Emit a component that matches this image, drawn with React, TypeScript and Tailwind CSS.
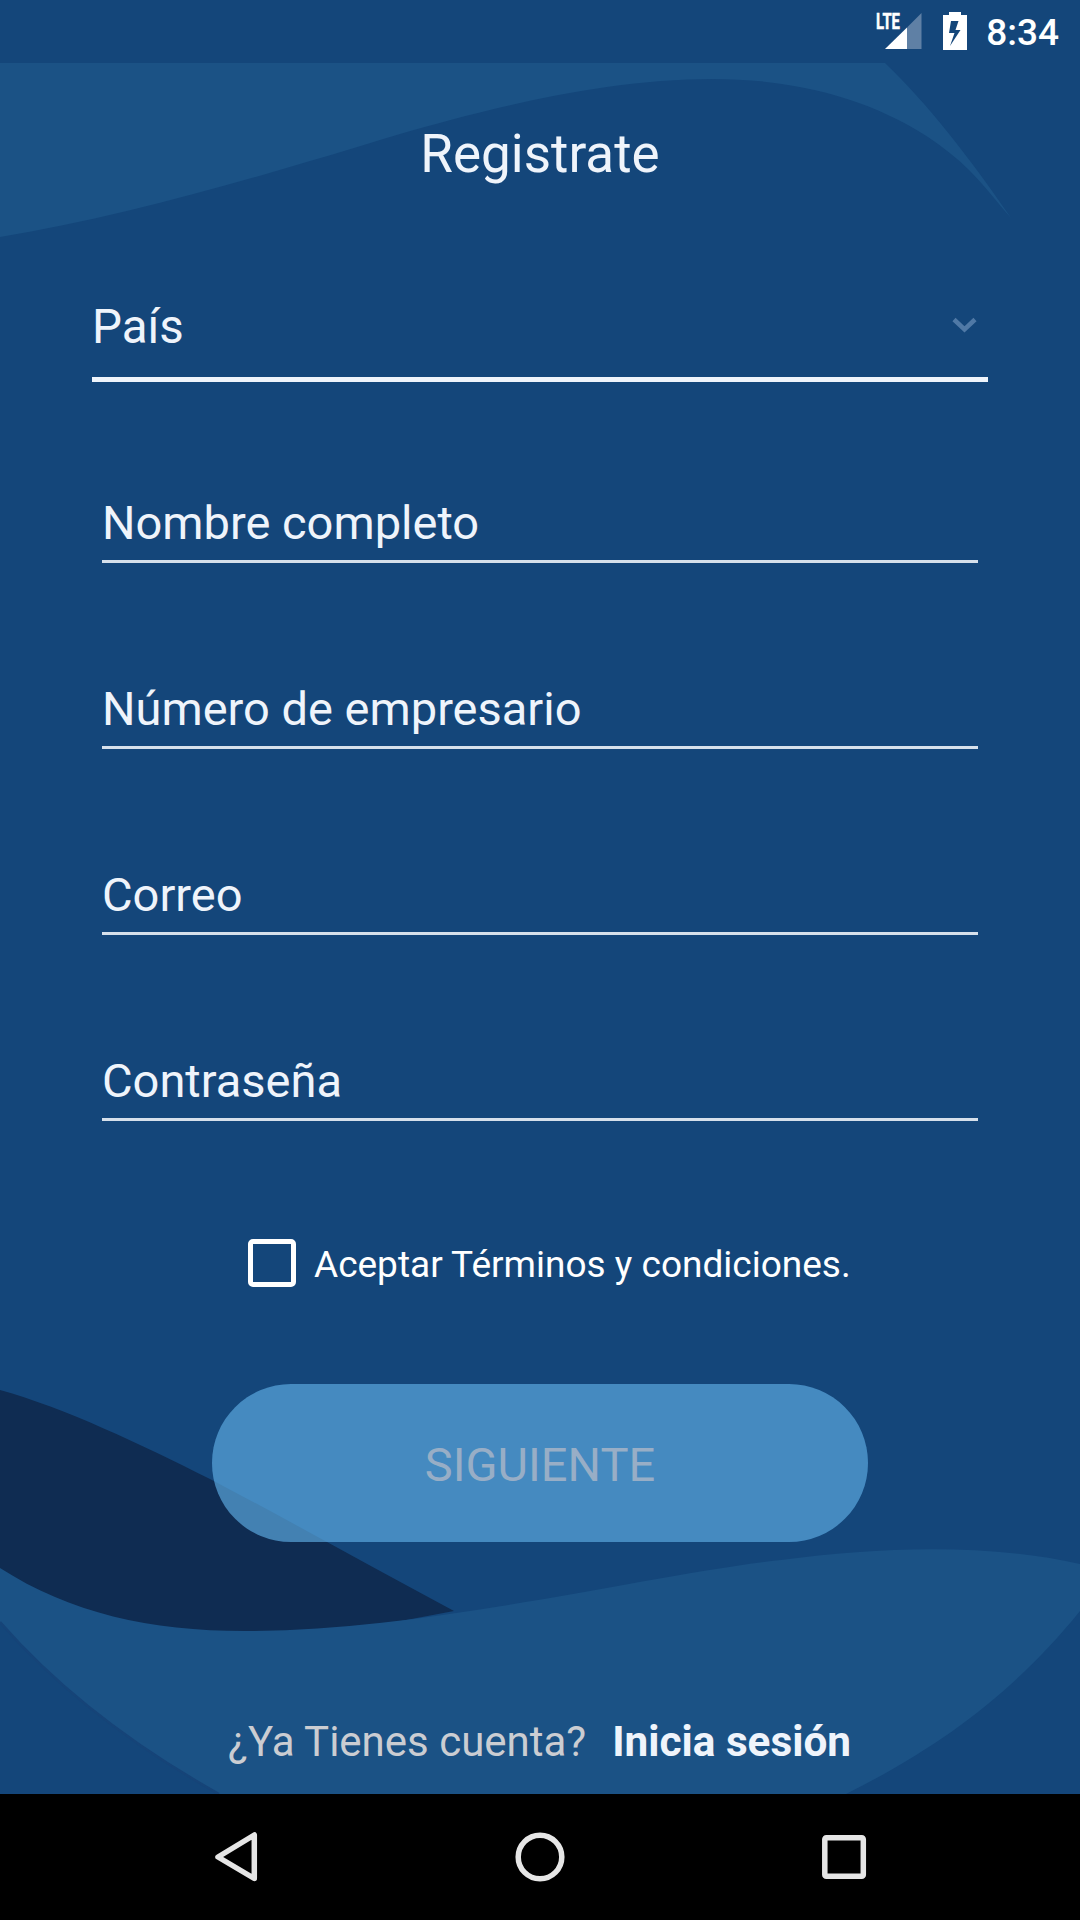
import { useState } from 'react';

const fields = ['Nombre completo', 'Número de empresario', 'Correo', 'Contraseña'];

const Waves = () => (
  <svg className="absolute inset-0 h-full w-full" viewBox="0 0 1080 1731" fill="none">
    <g transform="translate(0 -63)">
      <path
        d="M0 63H885C927 103 970 158 1011 218C997 202 984 185 970 171C957 158 943 147 928 137C862 94 785 79 713 79C600 79 480 111 400 134C275 172 130 216 0 237Z"
        fill="#1b5285"
      />
      <path d="M0 1390C65 1408 140 1444 210 1479C290 1521 370 1566 454 1611L300 1640L100 1625L0 1580Z" fill="#0f2c52" />
      <path
        d="M0 1568C70 1613 150 1631 245 1631C430 1631 640 1576 781 1560C880 1547 985 1543 1080 1564V1611C1020 1685 950 1742 846 1794H219C130 1744 55 1685 0 1622Z"
        fill="#1b5285"
      />
      <path d="M0 1622C55 1685 130 1744 219 1794" stroke="#164478" strokeWidth="2.5" />
    </g>
  </svg>
);

const StatusBar = () => (
  <header className="flex h-[63px] items-start justify-end bg-[#14467a] text-white">
    <svg className="mr-5 h-[63px] w-[49px]" viewBox="874 0 49 63">
      <text
        x="876"
        y="29"
        fill="#fff"
        stroke="#fff"
        strokeWidth="0.5"
        fontSize="22"
        fontWeight="700"
        textLength="24"
        lengthAdjust="spacingAndGlyphs"
      >
        LTE
      </text>
      <path d="M907 27.5L921.5 13V49H907Z" fill="#5f80a5" />
      <path d="M885 49L907 27.5V49Z" fill="#fff" />
    </svg>
    <svg className="mr-[19px] h-[63px] w-6" viewBox="943 0 24 63">
      <path
        d="M949 12H961V15H967V50H943V15H949ZM951 21L949 33H954.5L950 46L960.5 30H955.5L958.5 21Z"
        fill="#fff"
        fillRule="evenodd"
      />
    </svg>
    <span className="mr-[21px] mt-3 text-[37px] font-medium leading-[42px]">8:34</span>
  </header>
);

const NavBar = () => (
  <nav className="flex h-[126px] items-center justify-between bg-black pl-[211px] pr-[211px]">
    <svg className="h-[54px] w-[50px]" viewBox="211 1830 50 54" fill="none" stroke="#e6e6e6" strokeWidth="5.5" strokeLinejoin="round">
      <path d="M254.3 1835V1878.5L218 1857Z" />
    </svg>
    <svg className="h-[54px] w-[54px]" viewBox="513 1830 54 54" fill="none" stroke="#e6e6e6" strokeWidth="5.5">
      <circle cx="540" cy="1857" r="21.8" />
    </svg>
    <svg className="h-[54px] w-[50px]" viewBox="819 1830 50 54" fill="none" stroke="#e6e6e6" strokeWidth="5.5">
      <rect x="824.8" y="1837.7" width="38.5" height="38.5" rx="1.5" />
    </svg>
  </nav>
);

export default function App() {
  const [accepted, setAccepted] = useState(false);

  return (
    <div className="flex h-[1920px] w-[1080px] flex-col overflow-hidden bg-[#14467a] font-['Roboto',sans-serif] text-[#eff4fb]">
      <StatusBar />

      <main className="relative h-[1731px]">
        <Waves />
        <div className="relative flex h-full flex-col">
          <h1 className="mt-[59px] text-center text-[53px] leading-[64px]">Registrate</h1>

          {/* País */}
          <div className="mx-[92px] mt-[109px] flex h-[87px] items-start justify-between border-b-[5px] border-[#eff4fb]">
            <span className="text-[47.5px] leading-[64px]">País</span>
            <svg className="mr-[10px] mt-[21px] h-[18px] w-[28px]" viewBox="0 0 28 18" fill="none">
              <path d="M4 3.5L14.5 13.5L25 3.5" stroke="#5079a6" strokeWidth="4.5" />
            </svg>
          </div>

          <div className="mx-[102px] mt-[88px] flex flex-col gap-[93px]">
            {fields.map((field) => (
              <div key={field} className="h-[93px] border-b-[3px] border-[#d6e0eb] pt-[21px] text-[47px] leading-[64px]">
                {field}
              </div>
            ))}
          </div>

          <div className="ml-[248px] mt-[118px] flex h-[48px] items-center gap-[18px]">
            <button
              role="checkbox"
              aria-checked={accepted}
              aria-label="Aceptar"
              onClick={() => setAccepted(!accepted)}
              className={`h-[48px] w-[48px] rounded-[5px] border-[5px] border-white ${accepted ? 'bg-white' : ''}`}
            />
            <span className="whitespace-nowrap pt-[3px] text-[37px] leading-[44px] text-white">Aceptar Términos y condiciones.</span>
          </div>

          <button
            disabled
            className="mt-[97px] h-[158px] w-[656px] self-center rounded-full bg-[#60afe7]/65 pt-1 text-[47px] text-[#98aec6]"
          >
            SIGUIENTE
          </button>

          <p className="mr-[1px] mt-[170px] flex justify-center gap-[26px] whitespace-nowrap text-[42px] leading-[60px]">
            <span className="text-[#cbcdd2]">¿Ya Tienes cuenta?</span>
            <b className="text-[42.3px] font-bold">Inicia sesión</b>
          </p>
        </div>
      </main>

      <NavBar />
    </div>
  );
}
